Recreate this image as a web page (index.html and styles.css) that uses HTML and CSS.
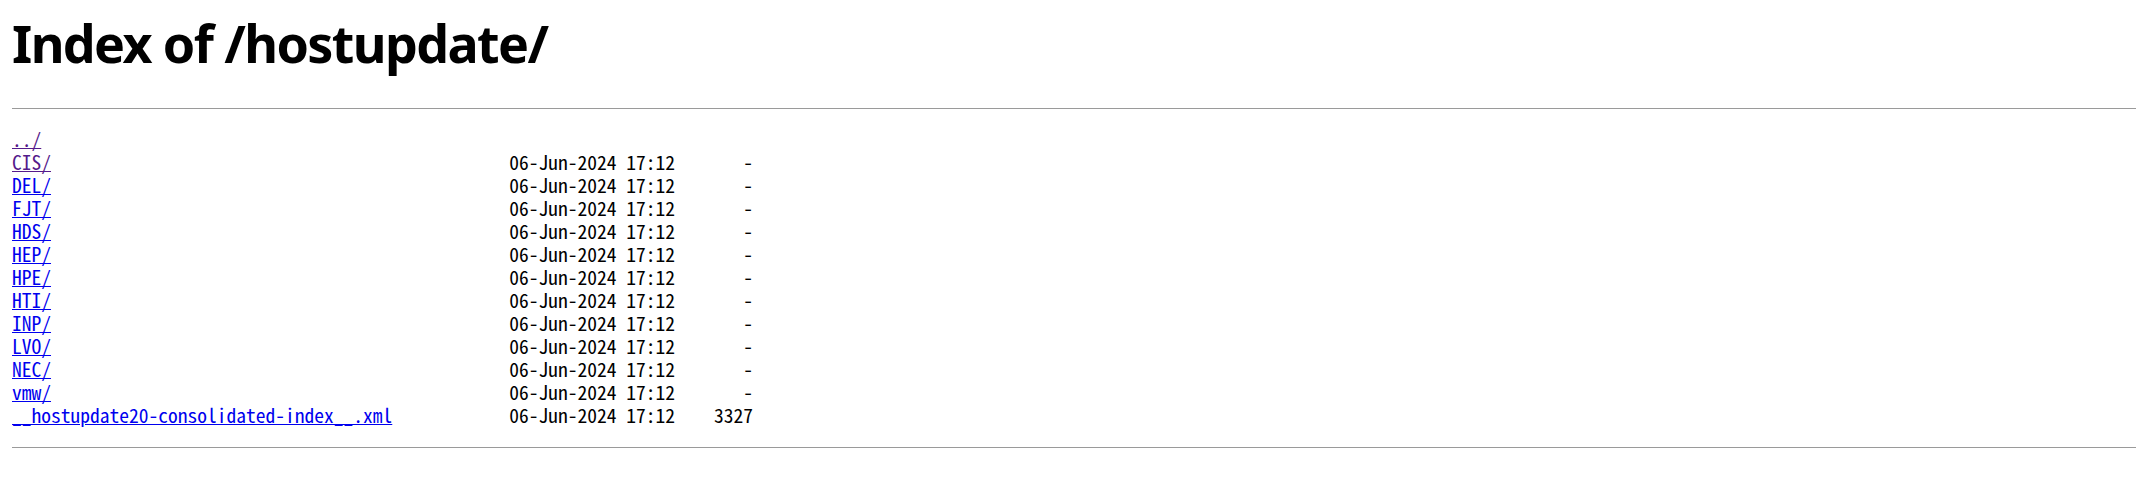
FILE: index.html
```html
<!DOCTYPE html>
<html>
<head>
    <meta charset="UTF-8">
    <title>Index of /hostupdate/</title>
    <link rel="stylesheet" href="styles.css">
</head>
<body>
<h1>Index of /hostupdate/</h1><hr><pre><a class="visited" href="../">../</a>
<a class="visited" href="CIS/">CIS/</a>                                               06-Jun-2024 17:12       -
<a href="DEL/">DEL/</a>                                               06-Jun-2024 17:12       -
<a href="FJT/">FJT/</a>                                               06-Jun-2024 17:12       -
<a href="HDS/">HDS/</a>                                               06-Jun-2024 17:12       -
<a href="HEP/">HEP/</a>                                               06-Jun-2024 17:12       -
<a href="HPE/">HPE/</a>                                               06-Jun-2024 17:12       -
<a href="HTI/">HTI/</a>                                               06-Jun-2024 17:12       -
<a href="INP/">INP/</a>                                               06-Jun-2024 17:12       -
<a href="LVO/">LVO/</a>                                               06-Jun-2024 17:12       -
<a href="NEC/">NEC/</a>                                               06-Jun-2024 17:12       -
<a href="vmw/">vmw/</a>                                               06-Jun-2024 17:12       -
<a href="__hostupdate20-consolidated-index__.xml">__hostupdate20-consolidated-index__.xml</a>            06-Jun-2024 17:12    3327
</pre><hr>
</body>
</html>
```

FILE: styles.css
```css
/* autoindex-sida, ritad i 1.5x skala */
body {
    margin: 0 12px;
    padding-top: 11px;
    background-color: #fff;
    color: #000;
}

h1 {
    font-family: "Noto Sans", "Open Sans", sans-serif;
    font-size: 52px;
    font-weight: bold;
    letter-spacing: -1.6px;
    line-height: 64px;
    margin: 0 0 33px 0;
}

hr {
    margin: 0;
    border: none;
    border-top: 1px solid #9a9a9a;
    height: 0;
}

pre {
    font-family: "Noto Sans Mono CJK SC", "Liberation Mono", monospace;
    font-size: 19.5px;
    line-height: 23px;
    margin: 18px 0 21px 0;
}

a {
    color: #0000ee;
}

a.visited {
    color: #551a8b;
}
```
